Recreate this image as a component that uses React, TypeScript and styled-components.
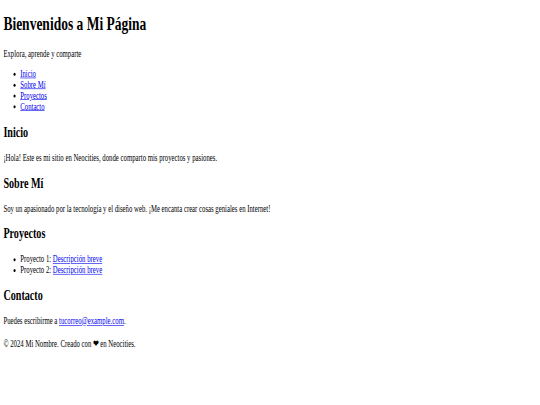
import React from "react";
import styled, { createGlobalStyle } from "styled-components";

const Global = createGlobalStyle`
  html, body { margin: 0; padding: 0; background: #ffffff; overflow: hidden; }
`;

const Frame = styled.div`
  width: 540px;
  height: 405px;
  overflow: hidden;
  background: #ffffff;
`;

const Viewport = styled.div`
  width: 1280px;
  height: 673px;
  transform: scale(0.421875, 0.602);
  transform-origin: 0 0;
  overflow: hidden;
  background: #ffffff;
`;

const Page = styled.div`
  padding: 8px;
  font-family: "Liberation Serif", "Times New Roman", serif;
  font-size: 16px;
  color: #000000;
  display: flow-root;
`;

const Title = styled.h1`
  font-size: 32px;
  font-weight: bold;
  margin: 13.44px 0 21.44px;
`;

const SectionTitle = styled.h2`
  font-size: 24px;
  font-weight: bold;
  margin: 19.92px 0;
`;

const Para = styled.p`
  margin: 16px 0;
`;

const List = styled.ul`
  margin: 16px 0;
  padding-left: 40px;
  list-style: disc;
`;

const Link = styled.a`
  color: #0000ee;
  text-decoration: underline;
`;

const Footer = styled.footer`
  margin-top: 19px;
`;

export default function App() {
  return (
    <>
      <Global />
      <Frame>
        <Viewport>
          <Page>
            <header>
              <Title>Bienvenidos a Mi Página</Title>
              <Para>Explora, aprende y comparte</Para>
              <nav>
                <List>
                  <li><Link href="#inicio">Inicio</Link></li>
                  <li><Link href="#sobre-mi">Sobre Mí</Link></li>
                  <li><Link href="#proyectos">Proyectos</Link></li>
                  <li><Link href="#contacto">Contacto</Link></li>
                </List>
              </nav>
            </header>
            <section id="inicio">
              <SectionTitle>Inicio</SectionTitle>
              <Para>¡Hola! Este es mi sitio en Neocities, donde comparto mis proyectos y pasiones.</Para>
            </section>
            <section id="sobre-mi">
              <SectionTitle>Sobre Mí</SectionTitle>
              <Para>Soy un apasionado por la tecnología y el diseño web. ¡Me encanta crear cosas geniales en Internet!</Para>
            </section>
            <section id="proyectos">
              <SectionTitle>Proyectos</SectionTitle>
              <List>
                <li>Proyecto 1: <Link href="#">Descripción breve</Link></li>
                <li>Proyecto 2: <Link href="#">Descripción breve</Link></li>
              </List>
            </section>
            <section id="contacto">
              <SectionTitle>Contacto</SectionTitle>
              <Para>Puedes escribirme a <Link href="mailto:tucorreo@example.com">tucorreo@example.com</Link>.</Para>
            </section>
            <Footer>
              <Para>© 2024 Mi Nombre. Creado con ❤ en Neocities.</Para>
            </Footer>
          </Page>
        </Viewport>
      </Frame>
    </>
  );
}
